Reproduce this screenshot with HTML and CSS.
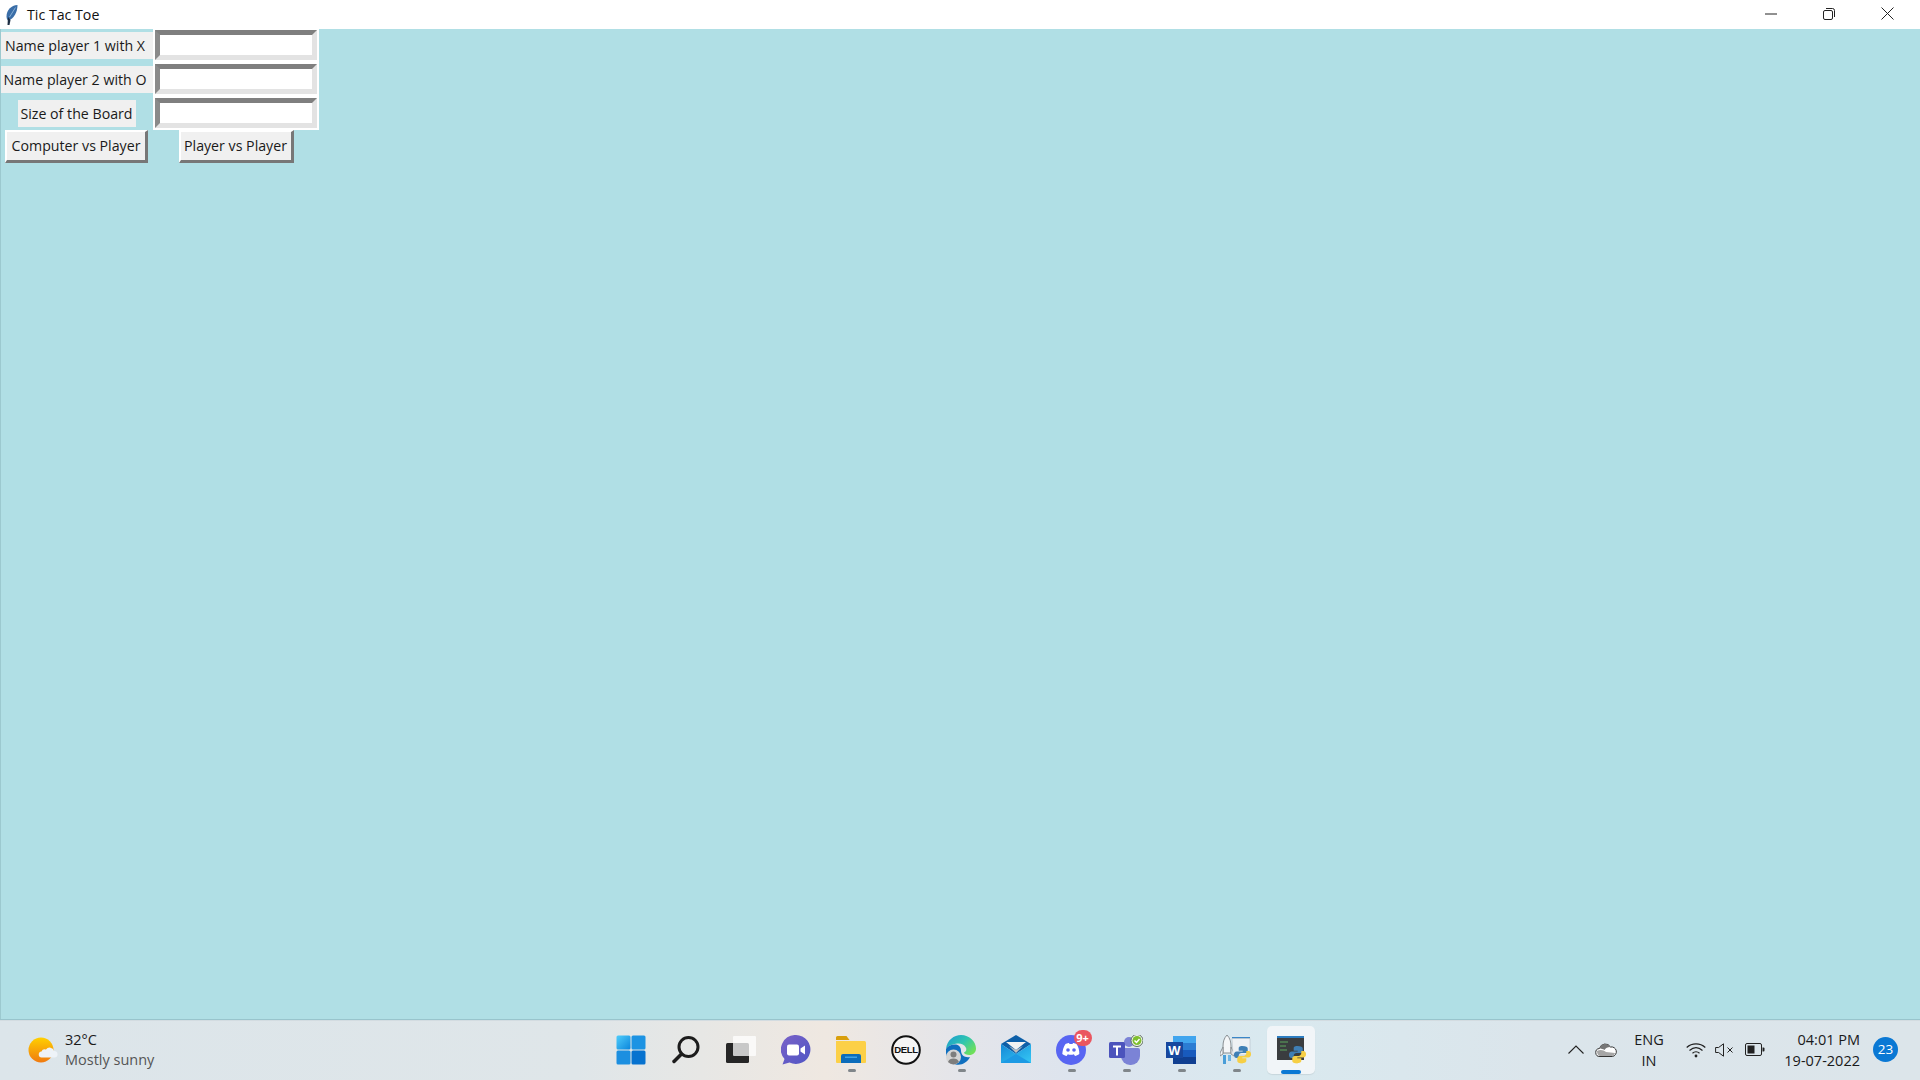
FILE: index.html
```html
<!DOCTYPE html>
<html lang="en">
<head>
<meta charset="utf-8">
<title>Tic Tac Toe</title>
<link rel="stylesheet" href="styles.css">
</head>
<body>
<svg class="defs" width="0" height="0" aria-hidden="true">
  <defs>
    <linearGradient id="winG" x1="0" y1="0" x2="1" y2="1"><stop offset="0" stop-color="#4fcdfb"/><stop offset="1" stop-color="#0a85dc"/></linearGradient>
    <linearGradient id="sunG" x1="0" y1="0" x2="0" y2="1"><stop offset="0" stop-color="#ffd000"/><stop offset="1" stop-color="#f07a10"/></linearGradient>
    <linearGradient id="edgeG" x1="0" y1="0" x2="1" y2=".7"><stop offset="0" stop-color="#1a98d5"/><stop offset=".55" stop-color="#2fc5b0"/><stop offset="1" stop-color="#6fe05a"/></linearGradient>
    <linearGradient id="chatG" x1="0" y1="0" x2="1" y2="1"><stop offset="0" stop-color="#7a62c8"/><stop offset="1" stop-color="#4f55c4"/></linearGradient>
    <linearGradient id="mailG" x1="0" y1="0" x2="1" y2="1"><stop offset="0" stop-color="#1488d6"/><stop offset="1" stop-color="#36c8f5"/></linearGradient>
    <symbol id="py" viewBox="0 0 20 20">
      <path fill="#3f7fb5" d="M9.800 1C6.500 1 6 2.300 6 3.600V6h4.200v.8H4C2 6.800 1 8.300 1 10.300s1 3.500 2.700 3.500H6v-2.300c0-1.700 1.300-3 3-3h4c1.400 0 2.500-1.100 2.500-2.500V3.600C15.500 2.200 13.800 1 9.800 1z"/>
      <path fill="#f6cf45" d="M10.200 19c3.300 0 3.800-1.300 3.800-2.600V14H9.800v-.8H16c2 0 3-1.500 3-3.500s-1-3.500-2.700-3.500H14v2.300c0 1.700-1.300 3-3 3H7c-1.400 0-2.500 1.100-2.500 2.500v2.900c0 1.400 1.700 2.600 5.700 2.600z"/>
    </symbol>
  </defs>
</svg>
<div class="window">
  <header class="titlebar">
    <svg class="feather" viewBox="0 0 12 20"><path fill="#3a6ea8" d="M11.500 0C5 .5.500 5 .5 11.500c0 1.500.5 3 1.500 4C8 14 11.500 7 11.500 0z"/><path fill="#1e2f44" d="M2 12 1.500 20H3.500L4.500 15z"/><path fill="none" stroke="#a9cbe8" stroke-width=".7" d="M9.500 2.500 3.500 12"/></svg>
    <span class="title">Tic Tac Toe</span>
    <div class="controls">
      <span class="ctl"><svg width="12" height="12" viewBox="0 0 12 12"><path d="M0 6h12" stroke="#222" stroke-width="1"/></svg></span>
      <span class="ctl"><svg width="12" height="12" viewBox="0 0 12 12"><rect x=".5" y="2.500" width="9" height="9" rx="1.500" fill="none" stroke="#222"/><path d="M3 .5h6.500a2 2 0 0 1 2 2V9" fill="none" stroke="#222"/></svg></span>
      <span class="ctl"><svg width="13" height="13" viewBox="0 0 13 13"><path d="M.5.5l12 12M12.500.5l-12 12" stroke="#222" stroke-width="1"/></svg></span>
    </div>
  </header>

  <main class="canvas">
    <form class="board-form">
      <div class="field-label"><span class="label l-wide">Name player 1 with X</span></div>
      <div class="entry-cell first"><input class="entry" type="text"></div>
      <div class="field-label"><span class="label l-wide">Name player 2 with O</span></div>
      <div class="entry-cell"><input class="entry" type="text"></div>
      <div class="field-label"><span class="label l-short">Size of the Board</span></div>
      <div class="entry-cell last"><input class="entry" type="text"></div>
      <div class="btn-cell"><button type="button" class="btn b-comp">Computer vs Player</button></div>
      <div class="btn-cell"><button type="button" class="btn b-play">Player vs Player</button></div>
    </form>
  </main>

  <footer class="taskbar">
    <div class="weather">
      <svg class="w-icon" width="30" height="30" viewBox="0 0 30 30"><circle cx="13" cy="15" r="12.500" fill="url(#sunG)"/><path fill="#eef3f8" d="M14 22.500a3 3 0 0 1-.5-6 3.500 3.500 0 0 1 4.500-2 4.500 4.500 0 0 1 8 1.500 3.300 3.300 0 0 1 1 6.500z"/></svg>
      <div class="w-text"><span class="temp">32°C</span><span class="cond">Mostly sunny</span></div>
    </div>

    <div class="apps">
      <div class="slot"><svg width="30" height="30" viewBox="0 0 30 30"><rect x="0.500" y="0.500" width="14" height="14" rx="1.500" fill="url(#winG)"/><rect x="15.500" y="0.500" width="14" height="14" rx="1.500" fill="#1c93e3"/><rect x="0.500" y="15.500" width="14" height="14" rx="1.500" fill="#1c8fe0"/><rect x="15.500" y="15.500" width="14" height="14" rx="1.500" fill="#0672cf"/></svg></div>
      <div class="slot"><svg width="30" height="30" viewBox="0 0 30 30"><circle cx="17.500" cy="12" r="9.500" fill="none" stroke="#1c1c1c" stroke-width="3"/><path d="M10.500 19 3 26.500" stroke="#1c1c1c" stroke-width="3.500" stroke-linecap="round"/></svg></div>
      <div class="slot"><svg width="30" height="30" viewBox="0 0 30 30"><rect x="0" y="8" width="23" height="20" rx="1.500" fill="#262626"/><rect x="7" y="1" width="23" height="20" rx="1" fill="#fff" fill-opacity=".75"/></svg></div>
      <div class="slot"><svg width="30" height="30" viewBox="0 0 30 30"><path fill="url(#chatG)" d="M15 0a14.500 14.500 0 1 1-6.500 27.500L1.500 29.500l2-5.500A14.500 14.500 0 0 1 15 0z"/><rect x="6" y="9.500" width="12" height="11" rx="2" fill="#fff"/><path fill="#fff" d="M19.500 13.500l4.500-3v9l-4.500-3z"/></svg></div>
      <div class="slot running"><svg width="30" height="30" viewBox="0 0 30 30"><path fill="#d99f0c" d="M0 2.500A1.500 1.500 0 0 1 1.500 1h9l3 4H0z"/><path fill="#fcd047" d="M0 6h28.500A1.500 1.500 0 0 1 30 7.500V27a1 1 0 0 1-1 1H1a1 1 0 0 1-1-1z"/><path fill="#0c6cba" d="M5 21a2 2 0 0 1 2-2h16a2 2 0 0 1 2 2v7H5z"/><rect x="9" y="21.500" width="12" height="1.500" fill="#3ea2e6"/></svg></div>
      <div class="slot"><svg width="30" height="30" viewBox="0 0 30 30"><circle cx="15" cy="15" r="13.800" fill="#fff" fill-opacity=".6" stroke="#111" stroke-width="2"/><text class="dell" x="15" y="18" text-anchor="middle">DELL</text></svg></div>
      <div class="slot running"><svg width="30" height="30" viewBox="0 0 30 30"><path fill="url(#edgeG)" d="M0 14C1 5 8 0 15 0c8.500 0 15 6.500 15 13.500 0 4-3 6.500-6.500 6.500-3 0-5.500-1-5.500-2.500 2.500-1 3-3.500 1.500-5.500C18 9.500 15 8 11 8.500 6 9 2 11 0 14z"/><path fill="#0f6fbf" d="M0 14c2-3.500 6-5 10-4.500 3 .5 5 3 5 6 0 5 4 7.500 9 6.500-2.500 5-7.500 8.300-13 7.700C4 29 -1 22 0 14z"/><circle cx="7.500" cy="22" r="7.500" fill="#d4d4d4"/><circle cx="7.500" cy="19.500" r="3" fill="#7d7d7d"/><path fill="#7d7d7d" d="M2 27c.8-2.500 3-3.500 5.500-3.500S12.200 24.500 13 27a7.500 7.500 0 0 1-11 0z"/></svg></div>
      <div class="slot"><svg width="30" height="30" viewBox="0 0 30 30"><path fill="#0d5fa8" d="M0 9 15 0l15 9-15 10z"/><path fill="#f2f2f2" d="M5 7h20L15 15z"/><path fill="#bdbdbd" d="M8 11 15 15l7-4-7 7z"/><path fill="url(#mailG)" d="M0 9l15 10 15-10v19H0z"/><path fill="#1c9ae4" d="M0 28l15-9 15 9z"/></svg></div>
      <div class="slot running"><svg width="30" height="30" viewBox="0 0 30 30"><circle cx="15" cy="15" r="15" fill="#5865f2"/><path fill="#fff" d="M9.500 9c2-.8 3-1 3.500-1l.5 1h3l.5-1c.5 0 1.500.2 3.500 1 2 3 3 6.500 2.800 10-1.500 1.100-3 1.700-4.300 2l-1-1.600-.2-.2c-2 .7-4 .7-6 0l-1.200 1.800c-1.300-.3-2.800-.9-4.300-2C6.500 15.500 7.500 12 9.500 9z"/><circle cx="12" cy="15" r="1.800" fill="#5865f2"/><circle cx="18" cy="15" r="1.800" fill="#5865f2"/></svg><span class="badge">9+</span></div>
      <div class="slot running"><svg width="34" height="30" viewBox="0 0 34 30"><circle cx="20" cy="7" r="5" fill="#7b83d6"/><path fill="#7b83d6" d="M12 13h17a2 2 0 0 1 2 2v6a9 9 0 0 1-9 9h-1a9 9 0 0 1-9-9z"/><rect x="0" y="7" width="16" height="16" rx="1.500" fill="#4b53bc"/><path fill="#fff" d="M4 10.500h8v2H9v8H7v-8H4z"/><circle cx="28" cy="5.500" r="6" fill="#f4f7f4" stroke="#5d6d5d" stroke-width="1"/><circle cx="28" cy="5.500" r="4.500" fill="#7fbf2f"/><path d="M25.500 5.500l2 2 3-3.500" fill="none" stroke="#fff" stroke-width="1.500"/></svg></div>
      <div class="slot running"><svg width="30" height="30" viewBox="0 0 30 30"><rect x="7" y="1" width="23" height="7" fill="#41a5ee"/><rect x="7" y="8" width="23" height="7" fill="#2b7cd3"/><rect x="7" y="15" width="23" height="7" fill="#185abd"/><rect x="7" y="22" width="23" height="7" fill="#103f91"/><rect x="0" y="7" width="17" height="16" fill="#17479e"/><text class="word" x="8.500" y="20" text-anchor="middle">W</text></svg></div>
      <div class="slot running"><svg width="32" height="30" viewBox="0 0 32 30"><path fill="#f4f6f8" stroke="#8a9094" d="M7 0c3 3 4 7 4 11v7H3v-7C3 7 4 3 7 0z"/><path fill="#f4f6f8" stroke="#8a9094" d="M3 12l-3 6v3l3-2zM11 12l3 6v3l-3-2z"/><rect x="3" y="20" width="3" height="9" fill="#4a9ed8"/><rect x="8" y="20" width="3" height="6" fill="#6fb6e4"/><path d="M12 2h18v1.500H12z" fill="#3a86c8"/><path d="M12 3.500h18V20H13z" fill="#eef1f4" stroke="#aeb6bc" stroke-width=".5"/><use href="#py" x="13" y="10" width="19" height="19"/></svg></div>
      <div class="slot active"><svg width="32" height="30" viewBox="0 0 32 30"><rect x="2" y="1" width="27" height="24" fill="#3a3d3f"/><rect x="2" y="1" width="27" height="2" fill="#2c7cc0"/><path d="M5 7h8M5 11h6M5 15h7" stroke="#5da85e" stroke-width="1"/><use href="#py" x="13" y="10" width="19" height="19"/></svg></div>
    </div>

    <div class="tray">
      <span class="t t-chev"><svg width="16" height="9" viewBox="0 0 16 9"><path d="M.5 8.500 8 1l7.500 7.500" fill="none" stroke="#222" stroke-width="1.100"/></svg></span>
      <span class="t t-cloud"><svg width="22" height="14" viewBox="0 0 22 14"><path fill="#fff" stroke="#333" stroke-width="1" d="M5 13.500a4 4 0 0 1-.5-8 6 6 0 0 1 11-1.500 4.800 4.800 0 0 1 2 9.500z"/><path fill="#777" d="M4.500 5.500a6 6 0 0 1 11-1.500c-3 0-5 1-6 3C8 6 6 5.500 4.500 5.500z"/><path fill="#888" d="M2 8c3-2 7-1 9 1l9 1c-.5 2-1.500 3-3 3H5C3 13 2 10 2 8z" opacity=".75"/></svg></span>
      <span class="t t-lang"><span>ENG</span><span>IN</span></span>
      <span class="t t-wifi"><svg width="20" height="16" viewBox="0 0 20 16"><path d="M.7 5.500C6 .7 14 .7 19.300 5.500M3.500 8.500c4-3.500 9-3.500 13 0M6.500 11.300c2-1.800 5-1.800 7 0" fill="none" stroke="#222" stroke-width="1.200"/><circle cx="10" cy="14" r="1.400" fill="#222"/></svg></span>
      <span class="t t-vol"><svg width="20" height="14" viewBox="0 0 20 14"><path d="M.6 4.500h3L8.500.8v12.400L3.600 9.500h-3z" fill="none" stroke="#222" stroke-width="1"/><path d="M12.500 4.500l5 5M17.500 4.500l-5 5" stroke="#222" stroke-width="1"/></svg></span>
      <span class="t t-bat"><svg width="20" height="13" viewBox="0 0 20 13"><rect x=".5" y=".5" width="16" height="12" rx="1.500" fill="none" stroke="#222"/><rect x="2.500" y="2.500" width="7" height="8" fill="#222"/><path d="M17.500 4.500h1a1 1 0 0 1 1 1v2a1 1 0 0 1-1 1h-1z" fill="#222"/></svg></span>
      <span class="clock"><span>04:01 PM</span><span>19-07-2022</span></span>
      <span class="notify">23</span>
    </div>
  </footer>
</div>
</body>
</html>
```

FILE: styles.css
```css
* { box-sizing: border-box; }
html, body { margin: 0; height: 100%; }
body { font-family: "Open Sans", "Noto Sans", sans-serif; overflow: hidden; }
.defs { position: absolute; }
.window { width: 1920px; height: 1080px; display: flex; flex-direction: column; }

.titlebar { height: 29px; background: #fff; display: flex; align-items: center; padding-left: 6px; flex: none; }
.feather { width: 12px; height: 20px; }
.title { margin-left: 9px; font-size: 14.200px; color: #111; }
.controls { margin-left: auto; display: flex; padding-right: 3px; }
.ctl { width: 58.500px; height: 29px; display: flex; align-items: center; justify-content: center; padding-bottom: 2px; }

.canvas { flex: 1; background: #b0dfe5; box-shadow: inset 1px 0 0 #9cc9cf; border-bottom: 1px solid #98c4cc; }
.board-form { display: grid; grid-template-columns: 153px 166px; width: 319px; }
.field-label { display: flex; justify-content: center; padding-top: 3px; height: 34px; }
.label { height: 27px; background: #f0f0f0; font-size: 14.200px; color: #1a1a1a; display: flex; align-items: center; justify-content: center; white-space: nowrap; padding-bottom: 1px; }
.l-wide { width: 152px; margin-left: 1px; padding-right: 4px; }
.l-short { width: 118px; }
.entry-cell { background: #fff; padding: 1px 2px 3px; height: 34px; }
.entry-cell.last { height: 33px; padding-bottom: 2px; }
.field-label:nth-child(5) { height: 33px; }
.entry { display: block; width: 100%; height: 100%; background: #fff; margin: 0; padding: 0; border-style: solid; border-width: 5px; border-color: #7f7f7f #e3e3e3 #e3e3e3 #8a8a8a; outline: 0; }
.btn-cell { display: flex; justify-content: center; height: 33px; }
.btn { height: 33px; margin: 0; padding: 0 0 2px; font: 14.200px "Open Sans", "Noto Sans", sans-serif; color: #1a1a1a; background: #f0f0f0; border-style: solid; border-width: 2px 3px 3px 2px; border-color: #fff #777 #777 #fff; white-space: nowrap; }
.b-comp { width: 143px; }
.b-play { width: 115px; }

.taskbar { height: 60px; flex: none; display: grid; grid-template-columns: 1fr auto 1fr; align-items: center; padding-bottom: 2px; border-top: 1px solid #d3dce1; background: linear-gradient(90deg, #dce5ea 0, #dfe6e9 30%, #efe8e1 43%, #e4e5ea 50%, #dde4ee 56%, #d9e9ef 66%, #dbe5eb 80%, #dce5ea 100%); }

.weather { display: flex; align-items: center; padding-left: 28px; gap: 7px; }
.w-text { display: flex; flex-direction: column; line-height: 20px; padding-top: 1px; font-size: 14.500px; }
.temp { color: #1a1a1a; }
.cond { color: #555; }

.apps { display: flex; margin-left: 2px; }
.slot { position: relative; width: 55px; height: 57px; display: flex; align-items: center; justify-content: center; }
.running::after { content: ""; position: absolute; left: 24px; bottom: 6px; width: 8px; height: 3px; border-radius: 2px; background: #80868a; }
.active::before { content: ""; position: absolute; left: 3px; top: 5px; width: 48px; height: 48px; border-radius: 5px; background: #f1f5f8; box-shadow: 0 1px 1px rgba(0,0,0,.08); }
.active::after { content: ""; position: absolute; left: 17px; bottom: 4px; width: 20px; height: 4px; border-radius: 2px; background: #0a78d4; }
.active svg { position: relative; }
.badge { position: absolute; left: 30px; top: 9px; width: 18px; height: 16px; border-radius: 8px; background: #ea5660; color: #fff; font-size: 11px; font-weight: 700; line-height: 16px; text-align: center; }
.dell { font: 900 9.500px "Liberation Sans", sans-serif; letter-spacing: -.3px; fill: #111; }
.word { font: 700 13px "Liberation Sans", sans-serif; fill: #fff; }

.tray { display: flex; align-items: center; justify-content: flex-end; padding-right: 22px; color: #1a1a1a; font-size: 14.500px; }
.t { display: flex; align-items: center; justify-content: center; }
.t-chev { width: 30px; }
.t-cloud { width: 30px; }
.t-lang { width: 56px; flex-direction: column; line-height: 21px; }
.t-wifi { width: 30px; margin-left: 4px; }
.t-vol { width: 28px; }
.t-bat { width: 32px; }
.clock { display: flex; flex-direction: column; align-items: flex-end; line-height: 21px; margin-left: 0; width: 89px; }
.notify { width: 25px; height: 25px; border-radius: 50%; background: #0a78d4; color: #fff; font-size: 13.500px; line-height: 25px; text-align: center; margin-left: 13px; }
```
